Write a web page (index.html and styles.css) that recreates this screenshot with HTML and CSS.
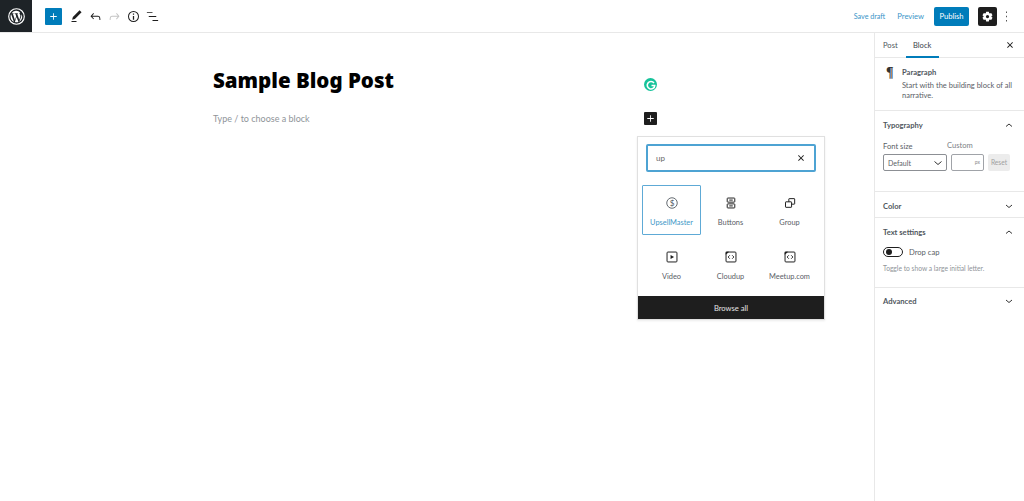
FILE: index.html
```html
<!DOCTYPE html>
<html lang="en">
<head>
<meta charset="utf-8">
<title>Sample Blog Post</title>
<link rel="stylesheet" href="styles.css">
</head>
<body>
<div class="app">
  <header class="topbar">
    <div class="wp-logo">
      <svg viewBox="0 0 24 24" width="17" height="17"><circle cx="12" cy="12" r="11" fill="none" stroke="#fff" stroke-width="1.6"/><path fill="#fff" d="M3.6 12c0 3.3 1.9 6.200 4.700 7.500L4.300 8.600A8.400 8.400 0 0 0 3.600 12zm14-.4c0-1-.4-1.700-.7-2.300-.4-.7-.8-1.200-.8-1.800 0-.7.5-1.300 1.200-1.300h.1A8.400 8.400 0 0 0 5 7.400h.5c.9 0 2.200-.1 2.200-.1.400 0 .5.600.1.700 0 0-.4 0-.9.100l2.900 8.700 1.800-5.300-1.300-3.400c-.4 0-.8-.1-.8-.1-.4 0-.4-.7 0-.7 0 0 1.300.1 2.100.1.900 0 2.200-.1 2.200-.1.400 0 .5.600.1.700 0 0-.4 0-.9.100l2.900 8.600.8-2.700c.3-1 .6-1.800.6-2.400zm-5.500 1.200-2.400 7a8.400 8.400 0 0 0 5.200-.1l-.1-.1zm6.900-4.500c0 .3.100.6.100.9 0 .9-.2 1.800-.6 3l-2.600 7.400a8.400 8.400 0 0 0 3.100-11.300z"/></svg>
    </div>
    <div class="tools">
      <button class="btn-add"><svg viewBox="0 0 24 24" width="13" height="13"><path fill="#fff" d="M18 11.200h-5.200V6h-1.600v5.200H6v1.600h5.200V18h1.600v-5.200H18z"/></svg></button>
      <svg class="tool" viewBox="0 0 24 24" width="15" height="15"><path fill="#1e1e1e" d="M20.100 5.100 16.900 2 6.200 12.700l-1.300 4.400 4.500-1.300zM4 20.800h8v-1.500H4z"/></svg>
      <svg class="tool" viewBox="0 0 24 24" width="15" height="15"><path fill="#1e1e1e" d="M18.300 11.700c-.6-.6-1.400-.9-2.300-.9H6.700l2.900-3.300-1.100-1-4.500 5L8.500 16.500l1.100-1-2.900-3.300H16c.5 0 .9.200 1.300.500 1 1 1 3.400 1 4.500v.3h1.500v-.2c0-1.500 0-4.300-1.500-5.800z"/></svg>
      <svg class="tool" viewBox="0 0 24 24" width="15" height="15"><path fill="#c4c4c4" d="M15.600 6.500l-1.100 1 2.900 3.300H8c-.9 0-1.700.3-2.300.9-1.400 1.500-1.400 4.200-1.400 5.800v.2h1.500v-.3c0-1.100 0-3.500 1-4.500.3-.3.700-.5 1.300-.5h9.200l-2.900 3.300 1.100 1 4.500-5z"/></svg>
      <svg class="tool" viewBox="0 0 24 24" width="15" height="15"><path fill="#1e1e1e" d="M12 3.200a8.800 8.800 0 1 0 0 17.600 8.800 8.800 0 0 0 0-17.600zm0 16a7.200 7.200 0 1 1 0-14.400 7.200 7.200 0 0 1 0 14.400zM11 11h2v6h-2zm0-4h2v2h-2z"/></svg>
      <svg class="tool" viewBox="0 0 24 24" width="15" height="15"><path fill="#1e1e1e" d="M3 5h9v1.500H3zm3 6.200h12v1.500H6zM12 17.500h9V19h-9z"/></svg>
    </div>
    <div class="actions">
      <span class="link save">Save draft</span>
      <span class="link preview">Preview</span>
      <button class="publish">Publish</button>
      <button class="settings"><svg viewBox="0 0 24 24" width="13" height="13"><path fill="#fff" fill-rule="evenodd" d="M14.500 3h-5l-.5 2.600-1.300.8-2.500-.9-2.500 4.300 2 1.700v1l-2 1.700 2.500 4.300 2.500-.9 1.300.8.500 2.600h5l.5-2.600 1.300-.8 2.500.9 2.500-4.300-2-1.700v-1l2-1.700-2.500-4.300-2.500.9-1.300-.8zM12 9a3 3 0 1 1 0 6 3 3 0 0 1 0-6z"/></svg></button>
      <svg class="more" viewBox="0 0 24 24" width="17" height="17"><path fill="#555" d="M11.300 5h1.400v2.200h-1.400zm0 5.900h1.400v2.200h-1.400zm0 5.900h1.400V19h-1.400z"/></svg>
    </div>
  </header>

  <div class="workspace">
    <main class="editor">
      <div class="post">
        <h1 class="title">Sample Blog Post</h1>
        <p class="placeholder">Type / to choose a block</p>
      </div>

      <div class="grammarly"><svg viewBox="0 0 24 24" width="12" height="12"><path fill="none" stroke="#fff" stroke-width="3.200" d="M18 8a7.500 7.500 0 1 0 1.500 5H13"/></svg></div>
      <button class="inline-add"><svg viewBox="0 0 24 24" width="13" height="13"><path fill="#fff" d="M18 11.200h-5.200V6h-1.600v5.200H6v1.600h5.200V18h1.600v-5.200H18z"/></svg></button>

      <div class="inserter">
        <div class="search">
          <span class="search-text">up</span>
          <svg viewBox="0 0 24 24" width="10" height="10"><path fill="#1e1e1e" d="M13.500 12l5.500-5.500-1.500-1.500L12 10.500 6.500 5 5 6.500l5.500 5.500L5 17.500 6.500 19l5.500-5.500 5.500 5.500 1.500-1.500z"/></svg>
        </div>
        <div class="block-grid">
          <div class="block-item selected">
            <svg viewBox="0 0 24 24" width="14" height="14"><circle cx="12" cy="12" r="9" fill="none" stroke="#50575e" stroke-width="1.500"/><text class="dollar" x="12" y="17" text-anchor="middle">$</text></svg>
            <span>UpsellMaster</span>
          </div>
          <div class="block-item">
            <svg viewBox="0 0 24 24" width="14" height="14"><path fill="none" stroke="#1e1e1e" stroke-width="1.700" d="M6.500 3.500h11a1 1 0 0 1 1 1v5a1 1 0 0 1-1 1h-11a1 1 0 0 1-1-1v-5a1 1 0 0 1 1-1zm0 10h11a1 1 0 0 1 1 1v5a1 1 0 0 1-1 1h-11a1 1 0 0 1-1-1v-5a1 1 0 0 1 1-1zM9 7h6M9 17h6"/></svg>
            <span>Buttons</span>
          </div>
          <div class="block-item">
            <svg viewBox="0 0 24 24" width="14" height="14"><path fill="none" stroke="#1e1e1e" stroke-width="1.700" d="M10 10V5.200a.7.7 0 0 1 .7-.7h8.600a.7.7 0 0 1 .7.7v8.100a.7.7 0 0 1-.7.700H14.700M5 10h9a.7.7 0 0 1 .7.700v8a.7.7 0 0 1-.7.700H5a.7.7 0 0 1-.7-.700v-8A.7.7 0 0 1 5 10z"/></svg>
            <span>Group</span>
          </div>
          <div class="block-item">
            <svg viewBox="0 0 24 24" width="14" height="14"><rect x="3.500" y="3.500" width="17" height="17" rx="1.500" fill="none" stroke="#1e1e1e" stroke-width="1.700"/><path fill="#1e1e1e" d="M9.500 8.500v7l6-3.500z"/></svg>
            <span>Video</span>
          </div>
          <div class="block-item">
            <svg viewBox="0 0 24 24" width="14" height="14"><rect x="3.500" y="3.500" width="17" height="17" rx="1.500" fill="none" stroke="#1e1e1e" stroke-width="1.700"/><path fill="#1e1e1e" d="M3 3h6l-6 5z"/><path fill="none" stroke="#1e1e1e" stroke-width="1.500" d="M10 9l-3 3 3 3m4-6l3 3-3 3"/></svg>
            <span>Cloudup</span>
          </div>
          <div class="block-item">
            <svg viewBox="0 0 24 24" width="14" height="14"><rect x="3.500" y="3.500" width="17" height="17" rx="1.500" fill="none" stroke="#1e1e1e" stroke-width="1.700"/><path fill="#1e1e1e" d="M3 3h6l-6 5z"/><path fill="none" stroke="#1e1e1e" stroke-width="1.500" d="M10 9l-3 3 3 3m4-6l3 3-3 3"/></svg>
            <span>Meetup.com</span>
          </div>
        </div>
        <div class="browse">Browse all</div>
      </div>
    </main>

    <aside class="sidebar">
      <div class="tabs">
        <span class="tab">Post</span>
        <span class="tab active">Block</span>
        <svg class="tabs-close" viewBox="0 0 24 24" width="10" height="10"><path fill="#1e1e1e" d="M13.500 12l5.500-5.500-1.500-1.500L12 10.500 6.500 5 5 6.500l5.500 5.500L5 17.500 6.500 19l5.500-5.500 5.500 5.500 1.500-1.500z"/></svg>
      </div>
      <section class="block-card">
        <span class="pilcrow">¶</span>
        <div>
          <h2 class="card-title">Paragraph</h2>
          <p class="card-desc">Start with the building block of all narrative.</p>
        </div>
      </section>
      <section class="panel typography">
        <div class="panel-head"><span>Typography</span><svg viewBox="0 0 24 24" width="12" height="12"><path class="chev" d="M6 15l6-5 6 5"/></svg></div>
        <div class="font-row">
          <div class="field">
            <label>Font size</label>
            <div class="select"><span>Default</span><svg viewBox="0 0 24 24" width="12" height="12"><path class="chev" d="M5 9l7 6 7-6"/></svg></div>
          </div>
          <div class="field">
            <label class="custom">Custom</label>
            <div class="custom-input">px</div>
          </div>
          <div class="reset">Reset</div>
        </div>
      </section>
      <section class="panel color">
        <div class="panel-head"><span>Color</span><svg viewBox="0 0 24 24" width="12" height="12"><path class="chev" d="M6 10l6 5 6-5"/></svg></div>
      </section>
      <section class="panel text-settings">
        <div class="panel-head"><span>Text settings</span><svg viewBox="0 0 24 24" width="12" height="12"><path class="chev" d="M6 15l6-5 6 5"/></svg></div>
        <div class="toggle-row"><span class="toggle"><span class="knob"></span></span><span>Drop cap</span></div>
        <p class="help">Toggle to show a large initial letter.</p>
      </section>
      <section class="panel advanced">
        <div class="panel-head"><span>Advanced</span><svg viewBox="0 0 24 24" width="12" height="12"><path class="chev" d="M6 10l6 5 6-5"/></svg></div>
      </section>
    </aside>
  </div>
</div>
</body>
</html>
```

FILE: styles.css
```css
* { box-sizing: border-box; }
html, body { margin: 0; height: 100%; overflow: hidden; }
body { background: #fff; color: #1e1e1e; font-family: Lato, "Open Sans", sans-serif; font-size: 7.600px; }
button { border: 0; padding: 0; margin: 0; font: inherit; display: flex; align-items: center; justify-content: center; }
h1, h2, p { margin: 0; }

.app { display: flex; flex-direction: column; height: 501px; }
.topbar { height: 33px; flex: none; display: flex; align-items: stretch; border-bottom: 1px solid #e8e8e8; }
.wp-logo { width: 32px; height: 32px; background: #1e2327; display: flex; align-items: center; justify-content: center; }
.tools { display: flex; align-items: center; padding-left: 13px; flex: 1; }
.btn-add { width: 17px; height: 17px; background: #007cba; border-radius: 1px; margin-right: 6.500px; }
.tool { margin-right: 4px; flex: none; }
.actions { display: flex; align-items: center; padding-right: 9px; }
.link { color: #3a95c8; font-size: 7.600px; }
.save { margin-right: 12px; font-size: 7.200px; }
.preview { margin-right: 10px; }
.publish { width: 35px; height: 19px; background: #007cba; color: #fff; font-size: 7.600px; border-radius: 2px; margin-right: 9px; }
.settings { width: 19px; height: 19px; background: #1e1e1e; border-radius: 2px; margin-right: 1px; }

.workspace { flex: 1; display: flex; min-height: 0; }
.editor { flex: 1; position: relative; }
.post { padding: 34px 0 0 213px; }
.title { font-family: "Noto Sans", "Open Sans", sans-serif; font-size: 20.500px; font-weight: 900; line-height: 27px; color: #000; }
.placeholder { margin-top: 19px; font-size: 9px; line-height: 12px; color: #8f9499; }

.grammarly { position: absolute; left: 644px; top: 45px; width: 13px; height: 13px; border-radius: 50%; background: #15c39a; display: flex; align-items: center; justify-content: center; }
.inline-add { position: absolute; left: 644px; top: 79px; width: 13px; height: 13px; background: #1e1e1e; border-radius: 1px; }
.inserter { position: absolute; left: 637px; top: 103px; width: 188px; background: #fff; border: 1px solid #e0e0e0; box-shadow: 0 1px 2px rgba(0,0,0,.08); display: flex; flex-direction: column; }
.search { margin: 7px 8px 0; height: 28px; border: 2px solid #4ea3d3; border-radius: 2px; display: flex; align-items: center; justify-content: space-between; padding: 0 8px 0 8px; }
.search-text { font-size: 8px; color: #666; }
.block-grid { display: grid; grid-template-columns: repeat(3, 59px); padding: 13px 4px 0; grid-auto-rows: 50px; row-gap: 4px; height: 124px; }
.block-item { display: flex; flex-direction: column; align-items: center; gap: 8px; padding-top: 10px; font-size: 7.400px; color: #5a6066; height: 50px; border: 1px solid transparent; border-radius: 1px; }
.block-item span { line-height: 10px; white-space: nowrap; }
.block-item.selected { border-color: #5eaad6; color: #4198c8; }
.dollar { font-size: 14px; fill: #50575e; font-family: Lato, sans-serif; }
.browse { height: 23px; background: #1e1e1e; color: #e4e4e4; font-size: 7.600px; display: flex; align-items: center; justify-content: center; }

.sidebar { width: 150px; flex: none; border-left: 1px solid #e8e8e8; display: flex; flex-direction: column; }
.tabs { height: 25px; flex: none; display: flex; align-items: stretch; padding-left: 8px; border-bottom: 1px solid #e8e8e8; position: relative; }
.tab { font-size: 7.600px; color: #50575e; line-height: 24px; }
.tab.active { margin-left: 8px; width: 33px; text-align: center; color: #3c434a; box-shadow: inset 0 -2px 0 #007cba; height: 25px; }
.tabs-close { position: absolute; right: 9px; top: 7px; }
.block-card { height: 52px; flex: none; display: flex; padding: 9px 8px 0 11px; gap: 6px; }
.pilcrow { font-family: "Liberation Serif", serif; font-size: 14px; line-height: 12px; font-weight: 700; color: #333; width: 10px; margin-right: 2px; }
.card-title { font-size: 7.600px; font-weight: 700; line-height: 11px; color: #50575e; }
.card-desc { font-size: 7.500px; line-height: 10px; margin-top: 3px; color: #5a6066; }
.panel { border-top: 1px solid #e8e8e8; flex: none; }
.panel-head { display: flex; align-items: center; justify-content: space-between; height: 27px; padding: 0 9px 0 8px; font-size: 7.600px; font-weight: 700; color: #50575e; }
.advanced .panel-head { height: 26px; }
.chev { fill: none; stroke: #333; stroke-width: 2; }
.typography { height: 81px; }
.color { height: 26px; }
.text-settings { height: 70px; }
.font-row { display: flex; align-items: flex-end; padding: 3px 0 0 8px; }
.field { display: flex; flex-direction: column; }
.field label { font-size: 7.600px; line-height: 10px; margin-bottom: 3px; color: #5a6066; }
.field label.custom { color: #7c8186; margin-top: -1px; margin-bottom: 4px; }
.select { width: 64px; height: 17px; border: 1px solid #8c8f94; border-radius: 2px; display: flex; align-items: center; justify-content: space-between; padding: 0 2px 0 4px; font-size: 7px; color: #5a6066; }
.custom-input { margin-left: 4px; width: 33px; height: 17px; border: 1px solid #a0a3a8; border-radius: 2px; font-size: 5px; color: #888; text-align: right; padding-right: 3px; line-height: 15px; }
.reset { margin-left: 4px; width: 22px; height: 17px; background: #ececec; color: #a0a0a0; font-size: 6.600px; line-height: 17px; text-align: center; border-radius: 2px; }
.toggle-row { display: flex; align-items: center; gap: 6px; padding: 0 0 0 8px; font-size: 7.600px; color: #5a6066; margin-top: 2px; }
.toggle { width: 20px; height: 10px; border: 1px solid #1e1e1e; border-radius: 5px; display: flex; align-items: center; padding-left: 2px; }
.knob { width: 6px; height: 6px; border-radius: 50%; background: #1e1e1e; }
.help { padding: 6px 0 0 8px; font-size: 6.700px; line-height: 10px; color: #8f9499; white-space: nowrap; }
```
